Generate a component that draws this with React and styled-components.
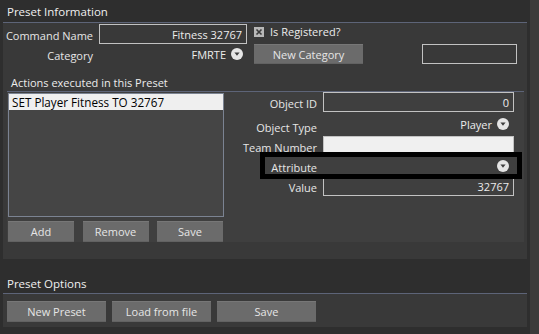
import React from 'react';
import styled, { createGlobalStyle } from 'styled-components';

const Global = createGlobalStyle`
  html, body { margin: 0; padding: 0; background: #2e2e2e; }
  body {
    font-family: "Open Sans", "Noto Sans", sans-serif;
    font-size: 11px;
    color: #e2e2e2;
  }
  * { box-sizing: border-box; }
`;

const Window = styled.div`
  width: 539px;
  height: 334px;
  display: flex;
  overflow: hidden;
  background: #2e2e2e;
`;

const Main = styled.div`
  width: 530px;
  padding: 0 3px;
  display: flex;
  flex-direction: column;
`;

const ScrollStrip = styled.div`
  width: 9px;
  background: #3b3b3b;
`;

const SectionHeader = styled.div`
  padding: ${(p) => p.$top}px 0 ${(p) => p.$bottom}px 4px;
  line-height: 16px;
  font-size: 11.5px;
  color: #f0f0f0;
  border-bottom: 1px solid #5d6478;
`;

const Panel = styled.div`
  background: #393939;
  display: flex;
  flex-direction: column;
  height: ${(p) => p.$h}px;
  padding-top: 1px;
`;

const Row = styled.div`
  display: flex;
  height: 20px;
  align-items: center;
`;

const Label = styled.div`
  width: 90px;
  flex-shrink: 0;
  text-align: right;
  align-self: flex-end;
  line-height: 16px;
  white-space: nowrap;
  color: #e6e6e6;
`;

const FormLabel = styled(Label)`
  width: auto;
  align-self: end;
`;

const TextBox = styled.input`
  width: ${(p) => p.$w}px;
  height: 20px;
  margin-left: ${(p) => p.$ml || 0}px;
  border: 1px solid #c2c2c2;
  background: ${(p) => (p.$light ? '#f0f0f0' : 'transparent')};
  color: #ececec;
  font: inherit;
  text-align: right;
  padding: 0 4px;
  line-height: 18px;
  outline: none;
`;

const CheckGroup = styled.div`
  margin-left: 7px;
  align-self: flex-start;
  display: flex;
  align-items: center;
  gap: 6px;
  line-height: 16px;
  color: #ececec;
`;

const DropField = styled.div`
  width: ${(p) => p.$w}px;
  margin-left: ${(p) => p.$ml || 0}px;
  display: flex;
  justify-content: flex-end;
  align-items: center;
  gap: 5px;
  padding-right: ${(p) => p.$pr || 4}px;
  color: #ececec;
`;

const Button = styled.div`
  width: ${(p) => p.$w}px;
  height: ${(p) => p.$h || 21}px;
  margin-left: ${(p) => p.$ml || 0}px;
  background: #6b6b6b;
  border-top: 1px solid #777;
  border-bottom: 1px solid #626262;
  color: #e6e6e6;
  display: flex;
  align-items: center;
  justify-content: center;
  flex-shrink: 0;
`;

const SubHeader = styled.div`
  margin: 0 3px 0 4px;
  height: 28px;
  padding: 11px 0 0 4px;
  line-height: 16px;
  border-bottom: 1px solid #5d6478;
  color: #ececec;
`;

const SubPanel = styled.div`
  margin: 0 3px 0 4px;
  height: 150px;
  background: #3f3f3f;
  display: grid;
  grid-template-columns: 217px 1fr;
`;

const LeftCol = styled.div`
  padding: 1px 0 0 1px;
  display: flex;
  flex-direction: column;
`;

const ListBox = styled.div`
  width: 216px;
  height: 124px;
  border: 1px solid #7b8392;
  background: #454545;
`;

const ListItem = styled.div`
  height: 16px;
  background: #efefef;
  color: #000;
  padding-left: 3px;
  line-height: 16px;
  font-size: 11.7px;
`;

const ButtonRow = styled.div`
  margin-top: 4px;
  width: 215px;
  display: flex;
  justify-content: space-between;
`;

const RightCol = styled.div`
  position: relative;
  display: grid;
  grid-template-columns: 1fr 191px;
  grid-template-rows: 20px 24px 20px 20px 20px;
  column-gap: 6px;
  padding-right: 10px;
  align-content: start;
`;

const Cell = styled.div`
  display: flex;
  align-items: center;
`;

const FocusFrame = styled.div`
  position: absolute;
  left: 36px;
  top: 60px;
  width: 262px;
  height: 27px;
  border: 5px solid #000;
  pointer-events: none;
`;

const BottomPanel = styled.div`
  background: #393939;
  height: 33px;
  padding: 7px 4px 5px;
  display: flex;
  gap: 6px;
`;

const DropIcon = () => (
  <svg width="12" height="12" viewBox="0 0 12 12">
    <circle cx="6" cy="6" r="6" fill="#e6e6e6" />
    <path d="M3.4 4.6 L8.6 4.6 L6 7.8 Z" fill="#3e3e3e" />
  </svg>
);

const CheckIcon = () => (
  <svg width="10" height="10" viewBox="0 0 10 10">
    <rect x="0" y="0" width="10" height="10" fill="#b8b8b8" />
    <path d="M2.5 2.5 L7.5 7.5 M7.5 2.5 L2.5 7.5" stroke="#3a3a3a" strokeWidth="1.6" />
  </svg>
);

export default function App() {
  return (
    <>
      <Global />
      <Window>
        <Main>
          <SectionHeader $top={4} $bottom={2}>Preset Information</SectionHeader>
          <Panel $h={236}>
            <Row>
              <Label>Command Name</Label>
              <TextBox $w={148} $ml={6} readOnly value="Fitness 32767" />
              <CheckGroup>
                <CheckIcon />
                <span>Is Registered?</span>
              </CheckGroup>
            </Row>
            <Row>
              <Label>Category</Label>
              <DropField $w={148} $ml={6}>
                <span>FMRTE</span>
                <DropIcon />
              </DropField>
              <Button $w={109} $h={20} $ml={7}>New Category</Button>
              <TextBox $w={95} $ml={59} readOnly value="" />
            </Row>
            <SubHeader>Actions executed in this Preset</SubHeader>
            <SubPanel>
              <LeftCol>
                <ListBox>
                  <ListItem>SET Player Fitness TO 32767</ListItem>
                </ListBox>
                <ButtonRow>
                  <Button $w={66}>Add</Button>
                  <Button $w={66}>Remove</Button>
                  <Button $w={66}>Save</Button>
                </ButtonRow>
              </LeftCol>
              <RightCol>
                <FormLabel>Object ID</FormLabel>
                <TextBox $w={191} readOnly value="0" />
                <FormLabel>Object Type</FormLabel>
                <Cell>
                  <DropField $w={191} $pr={5}>
                    <span>Player</span>
                    <DropIcon />
                  </DropField>
                </Cell>
                <FormLabel>Team Number</FormLabel>
                <TextBox $w={191} $light readOnly value="" />
                <FormLabel>Attribute</FormLabel>
                <Cell>
                  <DropField $w={191} $pr={5}>
                    <DropIcon />
                  </DropField>
                </Cell>
                <FormLabel>Value</FormLabel>
                <TextBox $w={191} readOnly value="32767" />
                <FocusFrame />
              </RightCol>
            </SubPanel>
          </Panel>
          <SectionHeader $top={17} $bottom={1}>Preset Options</SectionHeader>
          <BottomPanel>
            <Button $w={99}>New Preset</Button>
            <Button $w={99}>Load from file</Button>
            <Button $w={99}>Save</Button>
          </BottomPanel>
        </Main>
        <ScrollStrip />
      </Window>
    </>
  );
}
